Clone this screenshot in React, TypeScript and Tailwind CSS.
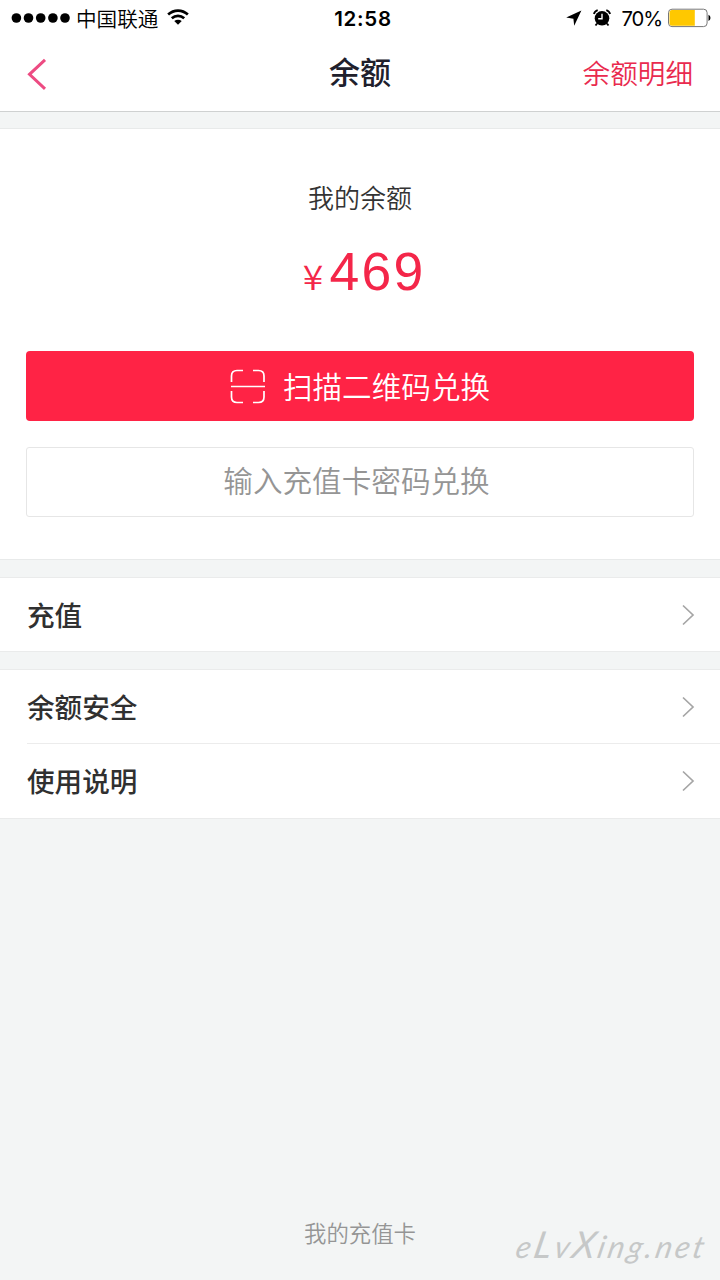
import React from "react";

interface RowProps {
  label: string;
  divided?: boolean;
}

const StatusBar: React.FC = () => (
  <div className="h-9 flex items-center text-black relative">
    <div className="flex items-center pl-[11px]">
      <svg width="60" height="12" viewBox="0 0 60 12" fill="currentColor">
        {[5.4, 17.5, 29.7, 41.9, 54].map((cx) => (
          <circle key={cx} cx={cx} cy="6" r="4.8" />
        ))}
      </svg>
      <span className="ml-[5px] -mt-px text-[20.6px] leading-9 font-[350]">中国联通</span>
      <svg
        className="ml-[9px] -mt-[2px]"
        width="22"
        height="18"
        viewBox="0 0 23 18"
        fill="none"
        stroke="currentColor"
        strokeWidth="2.8"
      >
        <path d="M1.2 6.4C7.2 .9 15.8 .9 21.8 6.4" />
        <path d="M5 10.4C8.8 7 14.2 7 18 10.4" />
        <path
          d="M7.6 13.3C10 11.3 13 11.3 15.4 13.3L11.5 17.2Z"
          fill="currentColor"
          stroke="none"
        />
      </svg>
    </div>
    <span className="absolute left-0 right-0 top-px text-center pl-[6px] font-['Inter'] font-semibold text-[20.5px] leading-9 tracking-[0.7px]">
      12:58
    </span>
    <div className="ml-auto flex items-center pr-[9px]">
      <svg className="mr-[1px]" width="16" height="16" viewBox="0 0 16 16" fill="currentColor">
        <path d="M15.4 .5L.2 7.6L7.4 8.8L8.2 15.7Z" />
      </svg>
      <svg className="ml-[10px]" width="18" height="18" viewBox="0 0 18 18">
        <circle cx="9" cy="9.3" r="7.3" fill="#000" />
        <path
          d="M.9 4.9C1.4 3 2.7 1.7 4.7 1.1M17.1 4.9C16.6 3 15.3 1.7 13.3 1.1M4 14.7L2.5 16.5M14 14.7L15.5 16.5"
          stroke="#000"
          strokeWidth="1.8"
          fill="none"
        />
        <path d="M9 4.8V9.8H5.2" stroke="#fff" strokeWidth="1.4" fill="none" />
      </svg>
      <span className="ml-[10px] mt-[2px] font-['Inter'] text-[20.3px] leading-9 tracking-[-1.1px]">
        70%
      </span>
      <svg className="ml-[6px]" width="43" height="20" viewBox="0 0 43 20">
        <rect x="0.5" y="1.2" width="38.6" height="17.4" rx="3.5" fill="#fff" stroke="#777" />
        <path d="M26.8 2H4Q1.5 2 1.5 4.5V15.3Q1.5 17.8 4 17.8H26.8Z" fill="#ffc800" />
        <path d="M40.5 6.8Q42.5 7.8 42.5 9.9T40.5 13Z" fill="#000" />
      </svg>
    </div>
  </div>
);

const Header: React.FC = () => (
  <div className="h-[75px] flex items-center justify-between relative pl-[27px] pr-[27px]">
    <svg width="20" height="32" viewBox="0 0 20 32" fill="none" stroke="#ed4b82" strokeWidth="3">
      <path d="M18 1.8L2.5 16.3L18 30.8" />
    </svg>
    <h1 className="absolute left-0 right-0 -top-[3px] text-center text-[31px] leading-[75px] font-medium text-[#20202c]">
      余额
    </h1>
    <button className="relative -mt-[2px] text-[27.6px] leading-[75px] font-[350] text-[#e92a4e]">
      余额明细
    </button>
  </div>
);

const Row: React.FC<RowProps> = ({ label, divided }) => (
  <div className="pl-[27px]">
    <div
      className={`h-[74px] flex items-center justify-between pr-[25px] ${
        divided ? "border-b border-[#ececec]" : ""
      }`}
    >
      <span className="text-[27.6px] font-medium text-[#303030]">{label}</span>
      <svg width="14" height="22" viewBox="0 0 14 22" fill="none" stroke="#a5a5a5" strokeWidth="1.7">
        <path d="M2 1.5L12 11L2 20.5" />
      </svg>
    </div>
  </div>
);

export default function App() {
  return (
    <div className="w-[720px] h-[1280px] flex flex-col overflow-hidden bg-[#f3f5f5] font-['Noto_Sans_CJK_SC',sans-serif]">
      <div className="h-[112px] bg-white border-b border-[#cfd1d1]">
        <StatusBar />
        <Header />
      </div>

      <div className="mt-4 h-[432px] bg-white border-y border-[#e8eaea] px-[26px] flex flex-col items-center">
        <p className="mt-[49px] text-[26px] leading-[38px] font-[350] text-[#333]">我的余额</p>
        <div className="mt-[21px] h-[72px] flex items-baseline pl-[8px] text-[#f42649]">
          <span className="w-[20px] text-center text-[34px] leading-[70px] mr-[7px] font-[350] scale-x-110">
            ¥
          </span>
          <span className="font-['Liberation_Sans'] text-[53.5px] leading-[70px] tracking-[2.2px]">
            469
          </span>
        </div>
        <button className="mt-[42px] w-full h-[70px] shrink-0 rounded-[4px] bg-[#ff2345] text-white flex items-center justify-center">
          <svg
            className="mr-[17px] mt-[2px]"
            width="36"
            height="36"
            viewBox="0 0 36 36"
            fill="none"
            stroke="#fff"
            strokeWidth="1.7"
          >
            <path d="M1.5 13V7Q1.5 1.5 7 1.5H13M23 1.5H28.5Q34 1.5 34 7V13M34 22V28Q34 33.5 28.5 33.5H23M13 33.5H7Q1.5 33.5 1.5 28V22M1 17.5H35" />
          </svg>
          <span className="text-[29.6px] font-[350]">扫描二维码兑换</span>
        </button>
        <button className="mt-[26px] w-full h-[70px] shrink-0 rounded-[3px] border border-[#e6e6e6] pr-[7px] pb-[3px] text-[29.6px] font-[350] text-[#959595]">
          输入充值卡密码兑换
        </button>
      </div>

      <div className="mt-[17px] h-[75px] bg-white border-y border-[#eaebeb]">
        <Row label="充值" />
      </div>

      <div className="mt-[17px] bg-white border-y border-[#eaebeb]">
        <Row label="余额安全" divided />
        <Row label="使用说明" />
      </div>

      <div className="mt-auto h-[92px] relative flex justify-center">
        <span className="mt-[28px] text-[22.4px] leading-8 font-[350] text-[#959595]">
          我的充值卡
        </span>
        <span className="absolute left-[517px] top-[33px] -skew-x-12 whitespace-nowrap font-['Lato',cursive] italic text-[31px] leading-[46px] tracking-[3px] text-[#c6c8c8]">
          e<span className="text-[37px]">L</span>v<span className="text-[37px]">X</span>ing.net
        </span>
      </div>
    </div>
  );
}
